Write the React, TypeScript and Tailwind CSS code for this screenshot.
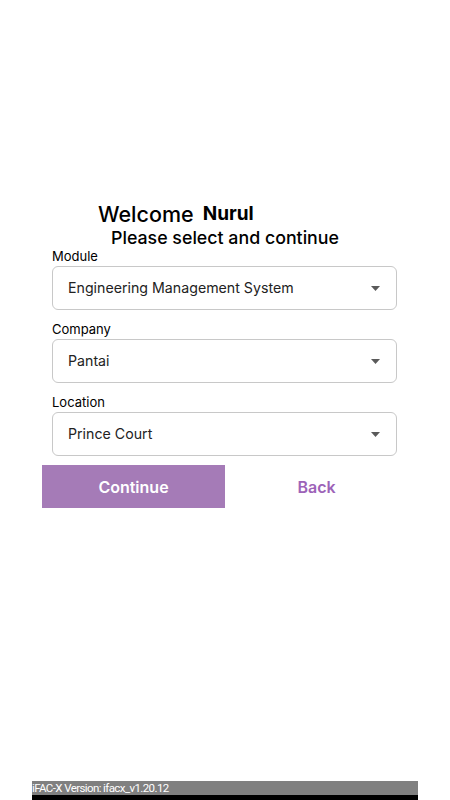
import React from "react";

function Select({ label, value }: { label: string; value: string }) {
  return (
    <div className="flex flex-col">
      <div className="text-[13px] leading-[16px] text-black h-[14px] mb-[2px] flex items-end">{label}</div>
      <div className="h-[44px] border border-[#c8c8c8] rounded-[6px] flex items-center pl-[15px] pr-[16px]">
        <span className="flex-1 text-[14.2px] text-[#222]">{value}</span>
        <svg width="9" height="5" viewBox="0 0 9 5">
          <path d="M0 0 L9 0 L4.5 5 Z" fill="#5a5a5a" />
        </svg>
      </div>
    </div>
  );
}

export default function App() {
  return (
    <div className="w-[450px] h-[800px] bg-white relative flex flex-col" style={{ fontFamily: "Inter, 'Noto Sans', sans-serif" }}>
      <div className="h-[200px]" />
      <div className="pl-[98px] flex items-end h-[26px] gap-[9px]">
        <span className="text-[21.5px] font-medium leading-[24px] text-black">Welcome</span>
        <span className="text-[19px] font-bold leading-[24px] text-black">Nurul</span>
      </div>
      <div className="pl-[111px] text-[17.8px] font-medium leading-[22px] text-black mt-[1px]">Please select and continue</div>
      <div className="px-[52px] flex flex-col gap-[13px] w-[450px] pr-[53px] mt-[1px]">
        <Select label="Module" value="Engineering Management System" />
        <Select label="Company" value="Pantai" />
        <Select label="Location" value="Prince Court" />
      </div>
      <div className="flex mt-[9px] pl-[42px]">
        <button className="w-[183px] h-[43px] bg-[#a57bb7] text-white text-[16px] font-semibold">Continue</button>
        <button className="w-[183px] h-[43px] text-[#9d63b8] text-[16px] font-semibold">Back</button>
      </div>
      <div className="flex-1" />
      <div className="mx-[32px] w-[386px]">
        <div className="h-[14px] bg-[#808080] text-white text-[11.5px] tracking-[-0.6px] leading-[14px] whitespace-nowrap overflow-hidden" style={{ fontFamily: "Roboto, sans-serif" }}>iFAC-X Version: ifacx_v1.20.12</div>
        <div className="h-[5px] bg-black" />
      </div>
    </div>
  );
}
